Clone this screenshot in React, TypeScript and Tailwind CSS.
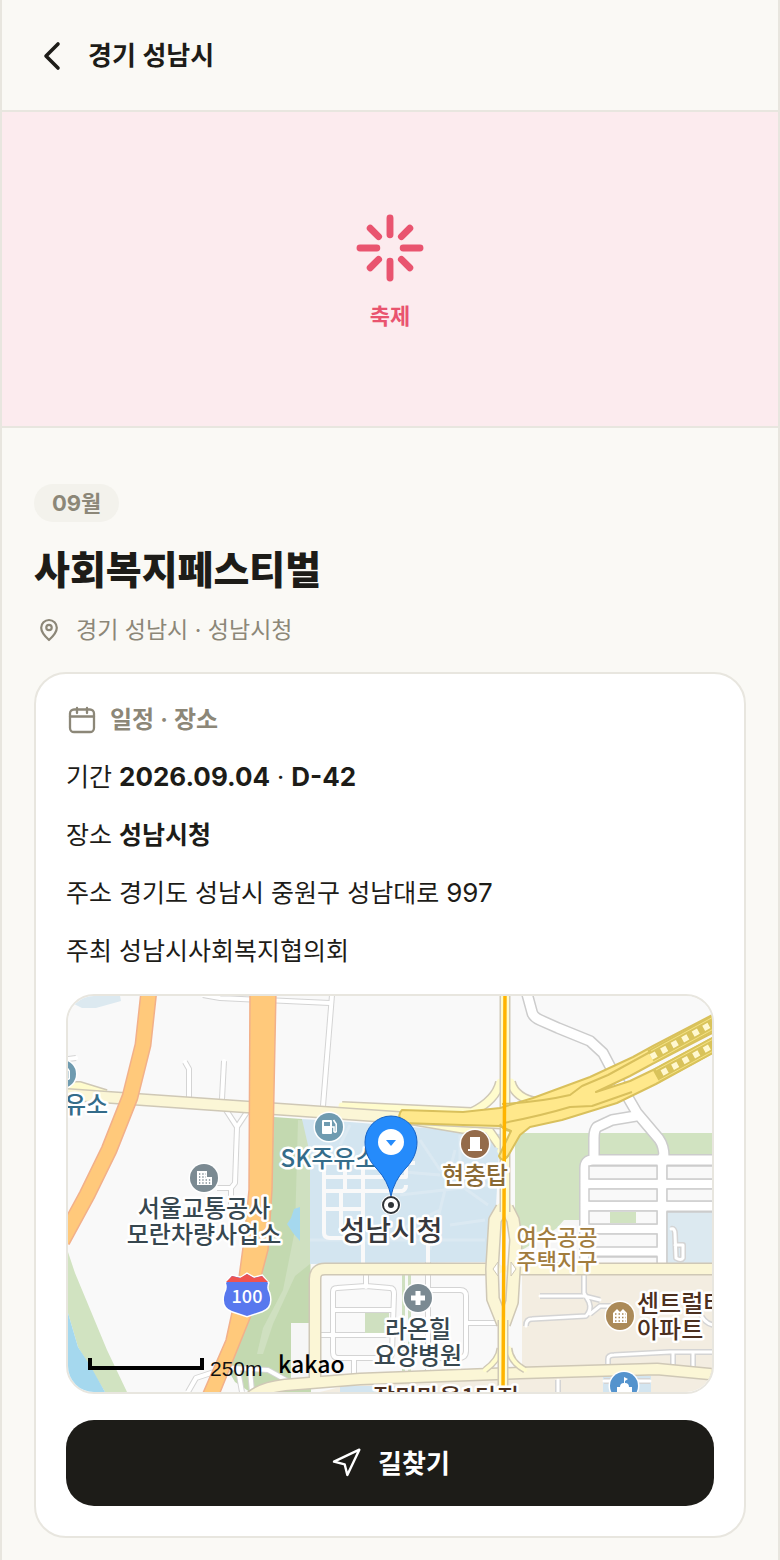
import type { ReactNode } from 'react';
import { ChevronLeft, Navigation } from 'lucide-react';

const festival = {
  region: '경기 성남시',
  category: '축제',
  month: '09월',
  name: '사회복지페스티벌',
  place: '성남시청',
  period: '2026.09.04',
  dday: 'D-42',
  address: '경기도 성남시 중원구 성남대로',
  addressNo: '997',
  host: '성남시사회복지협의회',
};

export default function App() {
  return (
    <div className="min-h-screen border-x-2 border-[#e8e6df] bg-[#faf9f5] font-[Inter,'Noto_Sans_CJK_KR',sans-serif] text-[#1d1c18]">
      <header className="flex items-center gap-3 border-b-2 border-[#e8e6df] pt-8 pb-[30px] pl-[26px]">
        <button type="button" aria-label="뒤로">
          <ChevronLeft size={48} strokeWidth={1.8} />
        </button>
        <h1 className="text-[26px] leading-[44px] font-semibold">{festival.region}</h1>
      </header>

      <div className="flex flex-col items-center gap-4 border-b-2 border-[#e8e6df] bg-[#fcebee] pt-[100px] pb-[94px] text-[#e9546f]">
        <BurstIcon />
        <p className="text-[22px] leading-8 font-semibold">{festival.category}</p>
      </div>

      <main className="px-8 pt-14 pb-[22px]">
        <span className="inline-block rounded-full bg-[#f3f2ec] px-[18px] align-top text-[22px] leading-[38px] font-bold text-[#8c8778]">
          {festival.month}
        </span>
        <h2 className="mt-[18px] text-[39px] leading-[60px] font-extrabold">{festival.name}</h2>
        <p className="mt-[14px] flex items-center gap-3 text-[23px] leading-8 text-[#8c8778]">
          <PinIcon />
          {festival.region} · {festival.place}
        </p>

        <section className="mt-[26px] rounded-[32px] border-2 border-[#e8e6df] bg-white p-[30px]">
          <h3 className="flex items-center gap-3 text-[24px] leading-8 font-semibold text-[#8c8778]">
            <CalendarIcon />
            일정 · 장소
          </h3>
          <div className="mt-5 flex flex-col gap-4 text-[25px] leading-[42px]">
            <InfoRow label="기간">
              <strong className="text-[26px] font-bold">{festival.period}</strong> ·{' '}
              <strong className="text-[26px] font-bold">{festival.dday}</strong>
            </InfoRow>
            <InfoRow label="장소">
              <strong className="font-bold">{festival.place}</strong>
            </InfoRow>
            <InfoRow label="주소">
              {festival.address} <span className="text-[26px]">{festival.addressNo}</span>
            </InfoRow>
            <InfoRow label="주최">{festival.host}</InfoRow>
          </div>

          <div className="mt-[22px] h-[400px] overflow-hidden rounded-[28px] border-2 border-[#e8e6df] bg-[#f9f9f9]">
            <PlaceMap />
          </div>

          <button
            type="button"
            className="mt-[26px] flex h-[86px] w-full items-center justify-center gap-4 rounded-[28px] bg-[#1d1c18] text-[26px] font-semibold text-white"
          >
            <Navigation size={32} strokeWidth={1.8} />
            길찾기
          </button>
        </section>
      </main>
    </div>
  );
}

function InfoRow({ label, children }: { label: string; children: ReactNode }) {
  return (
    <p>
      {label} {children}
    </p>
  );
}

function BurstIcon() {
  return (
    <svg className="size-[72px]" viewBox="0 0 24 24" fill="none" stroke="currentColor" strokeWidth="2.3" strokeLinecap="round">
      <path d="M12 2v5.6M12 16.4V22M2 12h5.6M16.4 12H22M5.4 5.4l2.8 2.8M15.8 15.8l2.8 2.8M5.4 18.6l2.8-2.8M15.8 8.2l2.8-2.8" />
    </svg>
  );
}

function PinIcon() {
  return (
    <svg className="size-[30px]" viewBox="0 0 30 30" fill="none" stroke="currentColor" strokeWidth="2.2" strokeLinejoin="round">
      <path d="M15 25C10.500 21 7.200 17.100 7.200 12.800a7.800 7.800 0 0 1 15.600 0c0 4.300-3.300 8.200-7.800 12.200z" />
      <circle cx="15" cy="12.500" r="2.700" />
    </svg>
  );
}

function CalendarIcon() {
  return (
    <svg className="size-8" viewBox="0 0 32 32" fill="none" stroke="currentColor" strokeWidth="2.3" strokeLinecap="round">
      <rect x="4" y="5.500" width="24" height="22.500" rx="4" />
      <path d="M4 12.500h24M11 4v5M21 4v5" />
    </svg>
  );
}

type RoadsProps = { paths: string[]; width: number; fill: string; edge: string; casing?: number };

// All the edges go down first, so that crossing roads open into each other.
function Roads({ paths, width, fill, edge, casing = 3 }: RoadsProps) {
  return (
    <g fill="none" strokeLinejoin="round">
      {paths.map((d) => (
        <path key={`edge ${d}`} d={d} stroke={edge} strokeWidth={width + casing} />
      ))}
      {paths.map((d) => (
        <path key={d} d={d} stroke={fill} strokeWidth={width} strokeLinecap="round" />
      ))}
    </g>
  );
}

type LabelProps = { x: number; y: number; color: string; size?: number; anchor?: 'start' | 'middle'; lines: string[] };

function Label({ x, y, color, size = 24, anchor = 'middle', lines }: LabelProps) {
  return (
    <text
      fontSize={size}
      fontWeight="500"
      fill={color}
      stroke="#fff"
      strokeWidth="5"
      strokeLinejoin="round"
      paintOrder="stroke"
      textAnchor={anchor}
    >
      {lines.map((line, i) => (
        <tspan key={line} x={x} y={y + i * (size + 2)}>
          {line}
        </tspan>
      ))}
    </text>
  );
}

function Poi({ x, y, color, children }: { x: number; y: number; color: string; children: ReactNode }) {
  return (
    <g transform={`translate(${x} ${y})`}>
      <circle r="15.5" fill="#fff" />
      <circle r="14" fill={color} />
      {children}
    </g>
  );
}

function FuelGlyph() {
  return (
    <g>
      <rect x="-7" y="-7" width="10" height="14" rx="1" fill="#fff" />
      <rect x="-5" y="-5" width="6" height="4" fill="#6f9bb0" />
      <path d="M3 0h2v4.500q1.200 1.500 2.200 0V-3L4.500-7" fill="none" stroke="#fff" strokeWidth="1.600" />
    </g>
  );
}

function PlaceMap() {
  return (
    <svg
      className="block h-full w-full font-['Noto_Sans_CJK_KR',sans-serif]"
      viewBox="68 996 644 396"
      preserveAspectRatio="xMidYMid slice"
      role="img"
      aria-label="성남시청 지도"
    >
      {/* ground */}
      <rect x="68" y="996" width="644" height="396" fill="#f9f9f9" />
      <path d="M68 996h52l1 5-25 7H82L68 1001z" fill="#dce9f0" />
      <path d="M68 1252l7 21 32 77 20 42h-22l-27-45-10-34z" fill="#d1e3c1" />
      <path d="M68 1313l10 34 13 20 14 25H68z" fill="#a5d8ee" />
      <path d="M274 1117l28 2 8 30 1 243h-61l-15-10-7-12 22-55 18-70z" fill="#c3d9b0" />
      <path d="M298 1120l12 1v143l-15 12-22 48-10 30h-6l6-26 20-38 12-60z" fill="#cfe0c0" />
      <path d="M300 1207v34l-7-8-6-9 4-6 3-9z" fill="#a5d8ee" />
      <path d="M291 1323h19v60h-19z" fill="#f6f6f6" />
      <path d="M302 1119l48 3 150 12-4 72-9 56-177 2v-110z" fill="#d3e5f0" />
      <path
        d="M310 1240h175M420 1140l20 30 50 10M400 1230l40-20 15-60M430 1250l10-40M460 1135v50l28 20M380 1170l60 5M400 1195l88-10M340 1145l10-20M450 1225l35-5"
        fill="none"
        stroke="#dbe9f2"
        strokeWidth="3"
      />
      <path d="M515 1133h197v140H515z" fill="#d1e3c1" />
      <path d="M564 1220h18v44h-60v-14l20-12 15-10z" fill="#f6f6f6" />
      <path d="M522 1275h190v117H320l40-10 162-8z" fill="#f3ede1" />
      <path d="M340 1386h70v6h-70zM603 1376h48v16h-48z" fill="#d3e5f0" />

      {/* side streets */}
      <Roads
        width={4}
        casing={2}
        fill="#fff"
        edge="#d4d4d4"
        paths={[
          'M203 995L220 998 330 1003',
          'M332 995L323 1106',
          'M68 1059l8-1',
          'M185 1062l4 7v28',
          'M224 1061l-2 38',
          'M226 1110l11 17 10-15M237 1127l-2 56-4 5h-14M231 1188v27',
          'M188 1392l8-14 18-6 20-4 34 2 25 14M238 1370l4 22M250 1370l2 22',
          'M333 1292q0-4 4-4l29-2 24 2q4 0 4 6l-2 58q0 6-6 6h-48q-5 0-5-6zM334 1310h58M320 1335h73M366 1275v12M354 1358v18',
          'M428 1262v114M428 1290h32q6 0 6 6v55q0 7-8 7h-30M466 1323h34',
        ]}
      />
      <path d="M365 1313h24v20h-24zM402 1275h3v100h-3zM408 1275h3v100h-3z" fill="#cfe0c0" />
      <g fill="none" stroke="#f9f9f9" strokeWidth="4" strokeLinejoin="round">
        <path d="M324 1163v70q0 5 6 5h20M324 1163h91M326 1177h80V1163M326 1191h76q4-1 4-6M345 1163v30M363 1163v100M326 1209h37M341 1193v40M428 1240v24" />
      </g>

      {/* street grid by the housing district */}
      <Roads
        width={9}
        fill="#fff"
        edge="#cccccc"
        paths={[
          'M526 990l6 22q1 5 8 8l18 8 32 13 13 12 9 17 25 43 22 26q5 7 5 18',
          'M636 1116l-24 4-15 7q-3 3-3 11v20',
          'M720 1160H593q-8 0-8 8v101M590 1184h130M585 1206h130M585 1229h77M585 1251h77M662 1158v108',
        ]}
      />
      <g stroke="#cccccc" strokeWidth="1.500">
        <path
          d="M589 1166h68v13h-68zM589 1189h68v12h-68zM589 1211h68v13h-68zM589 1234h68v13h-68zM589 1257h68v12h-68zM667 1166h50v13h-50zM667 1189h50v12h-50z"
          fill="#f9f9f9"
        />
        <path d="M667 1212h50v58h-50z" fill="#dce9f0" />
      </g>
      <path d="M610 1212h26v11h-26z" fill="#d1e3c1" />
      <Roads
        width={3}
        casing={3}
        fill="#fff"
        edge="#d4d4d4"
        paths={[
          'M671 1229q4-1 4 5l1 24q5 3 7 0v-13h-8',
          'M540 1296h43M584 1275v18l5 9q3 8-3 14l-54 3q-6 0-6 7M584 1296l16 4M590 1314l10-8h20',
          'M608 1366v-7q0-4 6-4l56-3h45M673 1353v14M693 1353v14M558 1380v12M700 1313q4 10 13 12',
          'M604 1381h46',
        ]}
      />

      {/* yellow roads */}
      <Roads
        width={7}
        fill="#fffccd"
        edge="#cfc8b6"
        paths={['M64 1086h16l26 8', 'M500 1082q-4 18-28 30l-130-6M511 1082q4 16 26 20l-30 10M403 1119l60 10h25l11 16M527 1117l-26 34']}
      />
      <Roads
        width={10}
        fill="#fbf6d6"
        edge="#cfc8b6"
        paths={[
          'M60 1094l187 13 30 2 130 9 95 5 30-10',
          'M498 1269H325q-10 0-10 10v102M510 1269h210',
          'M250 1398q10-10 35-13l75-6 160-6 137-4 63 6',
        ]}
      />
      <Roads width={4} fill="#fffccd" edge="#cfc8b6" paths={['M500 1348q-1 12-15 22M509 1348q1 14 16 22']} />
      <Roads
        width={11}
        fill="#fbf6d6"
        edge="#cfc8b6"
        paths={['M502 1208l-7 12-3 49 1 30 10 25M507 1208l6 12 3 20-2 29-2 33-8 22']}
      />
      <Roads width={8} fill="#fffccd" edge="#cfc8b6" paths={['M505 990v222M503 1320v80']} />
      <path d="M498 1262l-5 7 5 7zM511 1262l5 7-5 7z" fill="#fff" stroke="#cfc8b6" />

      {/* expressway ramps */}
      <g strokeLinejoin="round">
        <path
          d="M402 1110L463 1112 500 1108 533 1098 590 1077 633 1057 653 1046 718 1012V1030L654 1063 630 1076 596 1092 630 1081 655 1069 718 1035V1050L656 1084 617 1103 562 1120 530 1127 520 1135 508 1156Q502 1163 499 1156L511 1131 500 1126 463 1125 403 1123Q396 1116 402 1110z"
          fill="#ffe88b"
          stroke="#d9c05c"
          strokeWidth="2"
        />
        <path
          d="M502 1104Q540 1102 570 1095L582 1086 608 1075 650 1052M503 1123Q540 1116 570 1107L592 1106 632 1092M500 1124q3 6 10 7"
          fill="none"
          stroke="#d9c05c"
          strokeWidth="2"
        />
      </g>
      <g fill="none">
        <path d="M651 1057l66-36M656 1076l61-33" stroke="#d9c35a" strokeWidth="15" />
        <path d="M651 1051l66-36M653 1062l66-36M656 1070l61-33M658 1081l61-33" stroke="#f4e184" strokeWidth="1" />
        <path d="M651 1057l66-36M662 1073l55-30" stroke="#fff8d0" strokeWidth="6" strokeDasharray="6 6" />
      </g>
      <path d="M505 990l-1 222-1 183" fill="none" stroke="#ffb400" strokeWidth="3.500" />

      {/* trunk roads */}
      <Roads width={14} fill="#ffc97b" edge="#f2b08a" paths={['M149 990l-6 55-13 52-21 53-22 45-25 46']} />
      <path
        d="M250 990l-1 200-5 50-6 45-12 55-26 60h17l33-82 18-68 4-60 4-200z"
        fill="#ffc97b"
        stroke="#f2b08a"
        strokeWidth="1.500"
      />

      {/* route shield */}
      <path
        d="M247 1274l7 4 8-2 6 7q-2 6 1 10 4 14-7 18l-15 5-15-5q-11-4-7-18 3-5 1-10l6-7 9 2z"
        fill="#5878ee"
        stroke="#fff"
        strokeWidth="3"
        paintOrder="stroke"
      />
      <path d="M247 1274l7 4 8-2 6 6h-42l6-6 8 2z" fill="#ef5350" />
      <text x="247" y="1303" fontSize="18" fontWeight="500" fill="#fff" textAnchor="middle">
        100
      </text>

      {/* places */}
      <Poi x={62} y={1074} color="#6f9bb0">
        <FuelGlyph />
      </Poi>
      <Label x={64} y={1113} color="#346c8a" anchor="start" lines={['유소']} />
      <Poi x={329} y={1127} color="#6f9bb0">
        <FuelGlyph />
      </Poi>
      <Label x={329} y={1167} color="#346c8a" lines={['SK주유소']} />
      <Poi x={475} y={1144} color="#946b4a">
        <path d="M-5-7H5V5h2v2H-7V5h2z" fill="#fff" />
      </Poi>
      <Label x={475} y={1184} color="#8a6a34" lines={['현충탑']} />
      <Poi x={204} y={1178} color="#7b8a92">
        <path d="M-7-7H3v6h5v8H-7z" fill="#fff" />
        <path d="M-5-4h7M-5-1h7M-5 2H7M-5 5H7" stroke="#7b8a92" strokeWidth="1.300" strokeDasharray="1.300 2" />
      </Poi>
      <Label x={204} y={1217} color="#37474f" lines={['서울교통공사', '모란차량사업소']} />
      <Poi x={418} y={1298} color="#7b8a92">
        <path d="M-7 0H7M0-7V7" stroke="#fff" strokeWidth="5" />
      </Poi>
      <Label x={418} y={1338} color="#37474f" lines={['라온힐', '요양병원']} />
      <Label x={557} y={1245} color="#a17c3e" size={22} lines={['여수공공', '주택지구']} />
      <Poi x={620} y={1316} color="#ab8a58">
        <path d="M-7 7V-3l4-4 3 3 3-3 4 4V7z" fill="#fff" />
        <path d="M-5-2H6M-5 1.500H6M-5 5H6" stroke="#ab8a58" strokeWidth="1.500" strokeDasharray="1.500 2" />
      </Poi>
      <Label x={637} y={1312} color="#4c3020" anchor="start" lines={['센트럴타', '아파트']} />
      <Poi x={624} y={1386} color="#5493cd">
        <path d="M-7 8V1h3q0-4 4-4v-6l4 2-3 2v2q4 0 4 4h3v7z" fill="#fff" />
      </Poi>
      <Label x={446} y={1406} color="#4c3020" lines={['장미마을1단지']} />
      <Label x={391} y={1241} color="#37393d" size={28} lines={['성남시청']} />

      {/* marker */}
      <circle cx="391" cy="1205" r="10" fill="#fff" />
      <circle cx="391" cy="1205" r="8" fill="#fff" stroke="#2f3337" strokeWidth="2" />
      <circle cx="391" cy="1205" r="3" fill="#2f3337" />
      <path
        d="M391 1196q-3-15-14-27c-8-8-12-17-12-27a26 26 0 0 1 52 0c0 10-4 19-12 27q-11 12-14 27z"
        fill="#258bfb"
        stroke="#1763c5"
      />
      <circle cx="391" cy="1142" r="13" fill="#fff" />
      <path d="M386 1140h10l-5 6z" fill="#258bfb" />

      {/* scale and credit */}
      <path d="M90 1358v10h112v-10" fill="none" stroke="#000" strokeWidth="4" />
      <text x="210" y="1376" fontSize="21" fill="#111" className="font-['Liberation_Sans',sans-serif]">
        250m
      </text>
      <text x="278" y="1373" fontSize="23" fontWeight="500" fill="#000">
        kakao
      </text>
    </svg>
  );
}
